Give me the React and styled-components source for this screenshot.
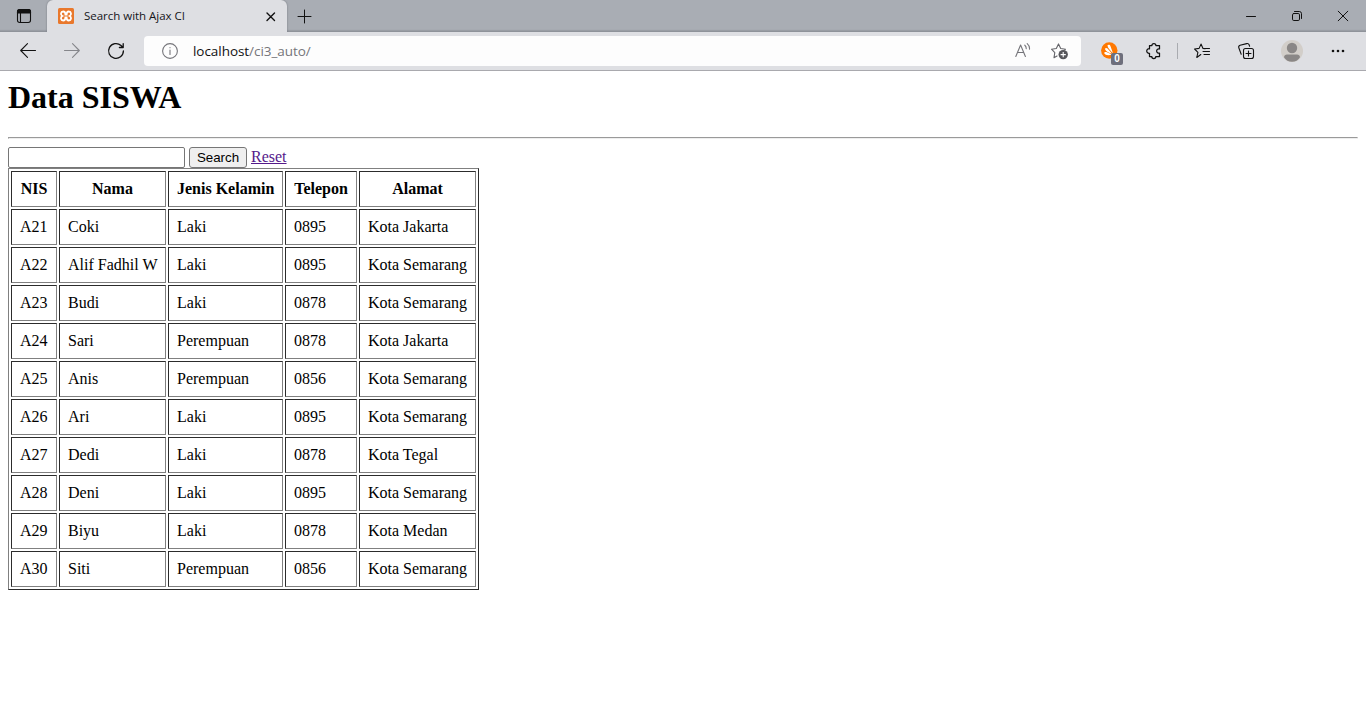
import React from "react";
import styled, { createGlobalStyle } from "styled-components";

const GlobalStyle = createGlobalStyle`
  * { box-sizing: border-box; }
  html, body { margin: 0; background: #fff; }
  body { overflow: hidden; }
`;

const Window = styled.div`
  height: 728px;
  display: flex;
  flex-direction: column;
  background: #fff;
`;

const uiFont = `"Open Sans", "Noto Sans", sans-serif`;

const TabStrip = styled.div`
  flex: none;
  display: flex;
  height: 32px;
  background: linear-gradient(#a9adb4 0 29px, #a3a7ae 30px, #8f939a 31px 32px);
`;

const IconSlot = styled.div`
  flex: none;
  display: flex;
  align-items: center;
  justify-content: center;
  width: ${(p) => p.$w}px;
  height: ${(p) => p.$h || 32}px;
  svg { display: block; overflow: visible; }
`;

const Tab = styled.div`
  display: flex;
  align-items: center;
  width: 240px;
  height: 32px;
  padding: 0 9px 0 11px;
  background: #dedfe3;
  border-radius: 6px 6px 0 0;
  box-shadow: 0 0 2px #70747b;
  clip-path: inset(0 -3px 0 -3px);
`;

const TabTitle = styled.span`
  flex: 1;
  margin-left: 10px;
  font: 11.5px/16px ${uiFont};
  letter-spacing: -0.02px;
  color: #15151a;
  white-space: nowrap;
`;

const Spacer = styled.div`
  flex: 1;
`;

const Toolbar = styled.div`
  flex: none;
  display: flex;
  align-items: center;
  height: 39px;
  padding-left: 6px;
  background: #dedfe3;
  border-bottom: 1px solid #a9a9ae;
`;

const AddressBar = styled.div`
  display: flex;
  align-items: center;
  width: 937px;
  height: 30px;
  margin-left: 6px;
  padding: 0 4px;
  background: #fdfdfd;
  border-radius: 4px;
`;

const Url = styled.div`
  flex: 1;
  padding-left: 1px;
  font: 13.5px/18px ${uiFont};
  letter-spacing: -0.05px;
  color: #111;
  span { color: #75757a; }
`;

const Divider = styled.div`
  width: 1px;
  height: 16px;
  margin: 0 2px;
  background: #a9abb0;
`;

const Extension = styled.div`
  position: relative;
  display: flex;
  width: 52px;
  height: 30px;
  padding: 6px 0 0 20px;
`;

const Count = styled.span`
  position: absolute;
  left: 30px;
  top: 17px;
  width: 12px;
  height: 12px;
  border-radius: 2px;
  background: #6e6f7c;
  color: #fff;
  font: bold 10px/12px "Liberation Sans", sans-serif;
  text-align: center;
`;

const Page = styled.main`
  flex: 1;
  padding: 8px;
  font: 15.9px/18px "Liberation Serif", "Times New Roman", serif;
  color: #000;
`;

const Heading = styled.h1`
  margin: 0;
  font-size: 32px;
  line-height: 37px;
`;

const Rule = styled.hr`
  height: 2px;
  margin: 21px 0 8px;
  border: 1px solid;
  border-color: #9a9a9a #eee #eee #9a9a9a;
`;

const SearchForm = styled.form`
  display: flex;
  align-items: center;
  gap: 4px;
  height: 21px;
`;

const SearchInput = styled.input`
  width: 177px;
  height: 21px;
  padding: 1px 2px;
  border: 1px solid #767676;
  border-radius: 2px;
  background: #fff;
  outline: none;
`;

const SearchButton = styled.button`
  width: 58px;
  height: 21px;
  padding: 0;
  border: 1px solid #767676;
  border-radius: 3px;
  background: #efefef;
  color: #000;
  font: 13.333px/17px "Liberation Sans", Arial, sans-serif;
`;

const ResetLink = styled.a`
  margin-bottom: 1px;
  color: #551a8b;
  font-size: 16px;
  text-decoration: underline;
`;

const Table = styled.table`
  width: 471px;
  table-layout: fixed;
  border-collapse: separate;
  border-spacing: 2px;
  border: 1px solid;
  border-color: #808080 #2c2c2c #2c2c2c #808080;
  font-size: 16px;
  line-height: 18px;
`;

const cell = `
  height: 36px;
  padding: 8px;
  border: 1px solid;
  border-color: #2c2c2c #808080 #808080 #2c2c2c;
  white-space: nowrap;
`;

const HeadCell = styled.th`
  ${cell}
  width: ${(p) => p.$w}px;
  text-align: center;
`;

const Cell = styled.td`
  ${cell}
  text-align: left;
`;

const Icon = ({ size = 16, color = "#111", width = 1.1, children }) => (
  <svg
    width={size}
    height={size}
    viewBox={`0 0 ${size} ${size}`}
    fill="none"
    stroke={color}
    strokeWidth={width}
    strokeLinecap="round"
    strokeLinejoin="round"
  >
    {children}
  </svg>
);

const TabActionsIcon = () => (
  <Icon>
    <rect x="1.5" y="1.5" width="13" height="13" rx="2.2" />
    <path d="M1.5 4V3.5a2 2 0 0 1 2-2h9a2 2 0 0 1 2 2V5h-13z" fill="#111" />
    <path d="M4.5 5v9.3" />
  </Icon>
);

const XamppIcon = () => (
  <svg width="16" height="16" viewBox="0 0 16 16">
    <rect width="16" height="16" rx="1.5" fill="#e9782c" />
    <path
      d="M5.2 3.5C2.6 3.5 2.2 6.8 4.4 8 2.2 9.2 2.6 12.5 5.2 12.5c2 0 2.2-1.7 2.2-3h1.2c0 1.3.2 3 2.2 3 2.6 0 3-3.3.8-4.5 2.2-1.2 1.8-4.5-.8-4.5-2 0-2.2 1.7-2.2 3H7.4c0-1.3-.2-3-2.2-3z"
      fill="none"
      stroke="#fff"
      strokeWidth="1.8"
    />
  </svg>
);

const AvastIcon = () => (
  <svg width="17" height="17" viewBox="0 0 17 17">
    <circle cx="8.3" cy="8.5" r="8.2" fill="#ff7800" />
    <path d="M6.4 3.6c.8-1.4 2.6-1 3 .5l2.6 7.2C9.7 9 7 6.6 6.4 3.6z" fill="#fff" />
    <path d="M3.9 7c.4-1.3 1.8-1.4 2.6-.4l4.6 5.2C8 11 4.8 9.6 3.9 7z" fill="#fff" />
    <path d="M3.2 11.2c0-1.1 1.2-1.5 2.2-1.1l5.4 2.3c-2.6 1.2-6.6 1-7.6-1.2z" fill="#fff" />
  </svg>
);

const AvatarIcon = () => (
  <svg width="22" height="22" viewBox="0 0 22 22">
    <circle cx="11" cy="11" r="11" fill="#d2cec9" />
    <circle cx="11" cy="8" r="5.2" fill="#8a8786" />
    <path d="M3 17.2q.4-2.7 3-2.7h10q2.6 0 3 2.7-2.8 4.6-8 4.6t-8-4.6z" fill="#8a8786" />
  </svg>
);

const columns = [
  ["NIS", 46],
  ["Nama", 107],
  ["Jenis Kelamin", 115],
  ["Telepon", 72],
  ["Alamat", 117],
];

const students = [
  ["A21", "Coki", "Laki", "0895", "Kota Jakarta"],
  ["A22", "Alif Fadhil W", "Laki", "0895", "Kota Semarang"],
  ["A23", "Budi", "Laki", "0878", "Kota Semarang"],
  ["A24", "Sari", "Perempuan", "0878", "Kota Jakarta"],
  ["A25", "Anis", "Perempuan", "0856", "Kota Semarang"],
  ["A26", "Ari", "Laki", "0895", "Kota Semarang"],
  ["A27", "Dedi", "Laki", "0878", "Kota Tegal"],
  ["A28", "Deni", "Laki", "0895", "Kota Semarang"],
  ["A29", "Biyu", "Laki", "0878", "Kota Medan"],
  ["A30", "Siti", "Perempuan", "0856", "Kota Semarang"],
];

export default function App() {
  return (
    <Window>
      <GlobalStyle />
      <TabStrip>
        <IconSlot $w={47}><TabActionsIcon /></IconSlot>
        <Tab>
          <XamppIcon />
          <TabTitle>Search with Ajax CI</TabTitle>
          <Icon size={15} width={1.4}><path d="M4 4l7.5 7.5M11.5 4L4 11.5" /></Icon>
        </Tab>
        <IconSlot $w={35}>
          <Icon size={15} width={1}><path d="M1 7.5h13M7.5 1v13" /></Icon>
        </IconSlot>
        <Spacer />
        <IconSlot $w={46}>
          <Icon size={10} width={1}><path d="M.5 5.5h9" /></Icon>
        </IconSlot>
        <IconSlot $w={46}>
          <Icon size={10} width={1}>
            <rect x=".5" y="2.5" width="7" height="7" rx="1.3" />
            <path d="M2.5.5h4.8a2.2 2.2 0 0 1 2.2 2.2v4.8" />
          </Icon>
        </IconSlot>
        <IconSlot $w={46}>
          <Icon size={10} width={1}><path d="M.2.2l9.6 9.6M9.8.2L.2 9.8" /></Icon>
        </IconSlot>
      </TabStrip>

      <Toolbar>
        <IconSlot $w={44}>
          <Icon><path d="M15.5 7.5H.7M7.5.7L.7 7.5l6.8 6.8" /></Icon>
        </IconSlot>
        <IconSlot $w={44}>
          <Icon color="#85868b"><path d="M.5 7.5h14.8M8.5.7l6.8 6.8-6.8 6.8" /></Icon>
        </IconSlot>
        <IconSlot $w={44}>
          <Icon width={1.3}><path d="M15.4 8A7.4 7.4 0 1 1 13 2.5l1.8 1.8M15.2.7v3.8h-3.8" /></Icon>
        </IconSlot>
        <AddressBar>
          <IconSlot $w={44}>
            <Icon color="#75757a">
              <circle cx="8" cy="8" r="7.4" />
              <path d="M8 7v4.5M8 4.5v.3" />
            </Icon>
          </IconSlot>
          <Url>localhost<span>/ci3_auto/</span></Url>
          <IconSlot $w={37}>
            <Icon color="#75757a">
              <path d="M.8 13.5L5.6 2l4.8 11.5M2.5 9.5h6.2M9.8 2.2q1.6 1.3 1.4 3.6M12.2.6q2.6 2.2 2.3 5.7" />
            </Icon>
          </IconSlot>
          <IconSlot $w={36}>
            <svg width="17" height="16" viewBox="0 0 17 16" fill="none">
              <path
                d="M6.4 12.8L3 14.7l.8-5L.5 6.2l4.8-.7L7.5.9l2.2 4.6 4.8.7-1.1 1.1"
                stroke="#65656a"
                strokeWidth="1.1"
                strokeLinejoin="round"
              />
              <circle cx="12.2" cy="11.6" r="4.7" fill="#56565b" />
              <path d="M12.2 9v5.2M9.6 11.6h5.2" stroke="#fff" strokeWidth="1.1" />
            </svg>
          </IconSlot>
        </AddressBar>
        <Extension>
          <AvastIcon />
          <Count>0</Count>
        </Extension>
        <IconSlot $w={42}>
          <Icon width={1.25}>
            <path d="M3.5 2.5h2.4a2 2 0 0 1 4 0h3.6v3.4a2.2 2.2 0 1 0 0 4.2v3.4H9.8a2 2 0 0 1-4 0H3.5v-3.2a2.3 2.3 0 1 1 0-4.5z" />
          </Icon>
        </IconSlot>
        <Divider />
        <IconSlot $w={44}>
          <Icon>
            <path d="M6.8 11.5l-4 3 1.1-5.1L.6 6l4.5-.6L7 1.1l2 4.3 2 .4M10 5.5h5.5M9 8.5h6.5M10 11.5h5.5" />
          </Icon>
        </IconSlot>
        <IconSlot $w={44}>
          <Icon>
            <rect x="5.5" y="5.5" width="10" height="10" rx="2" />
            <path d="M10.5 8v5M8 10.5h5M3.2 11.2L.8 4.8a2 2 0 0 1 1.3-2.5L8.7.6a2 2 0 0 1 2.4 1.2l.5 1.4" />
          </Icon>
        </IconSlot>
        <IconSlot $w={48}><AvatarIcon /></IconSlot>
        <IconSlot $w={43}>
          <svg width="14" height="4" viewBox="0 0 14 4" fill="#111">
            <circle cx="2" cy="2" r="1.3" />
            <circle cx="7" cy="2" r="1.3" />
            <circle cx="12" cy="2" r="1.3" />
          </svg>
        </IconSlot>
      </Toolbar>

      <Page>
        <Heading>Data SISWA</Heading>
        <Rule />
        <SearchForm onSubmit={(e) => e.preventDefault()}>
          <SearchInput type="text" aria-label="Search" />
          <SearchButton type="submit">Search</SearchButton>
          <ResetLink href="#">Reset</ResetLink>
        </SearchForm>
        <Table>
          <thead>
            <tr>
              {columns.map(([label, w]) => (
                <HeadCell key={label} $w={w}>{label}</HeadCell>
              ))}
            </tr>
          </thead>
          <tbody>
            {students.map((row) => (
              <tr key={row[0]}>
                {row.map((value, i) => (
                  <Cell key={i}>{value}</Cell>
                ))}
              </tr>
            ))}
          </tbody>
        </Table>
      </Page>
    </Window>
  );
}
